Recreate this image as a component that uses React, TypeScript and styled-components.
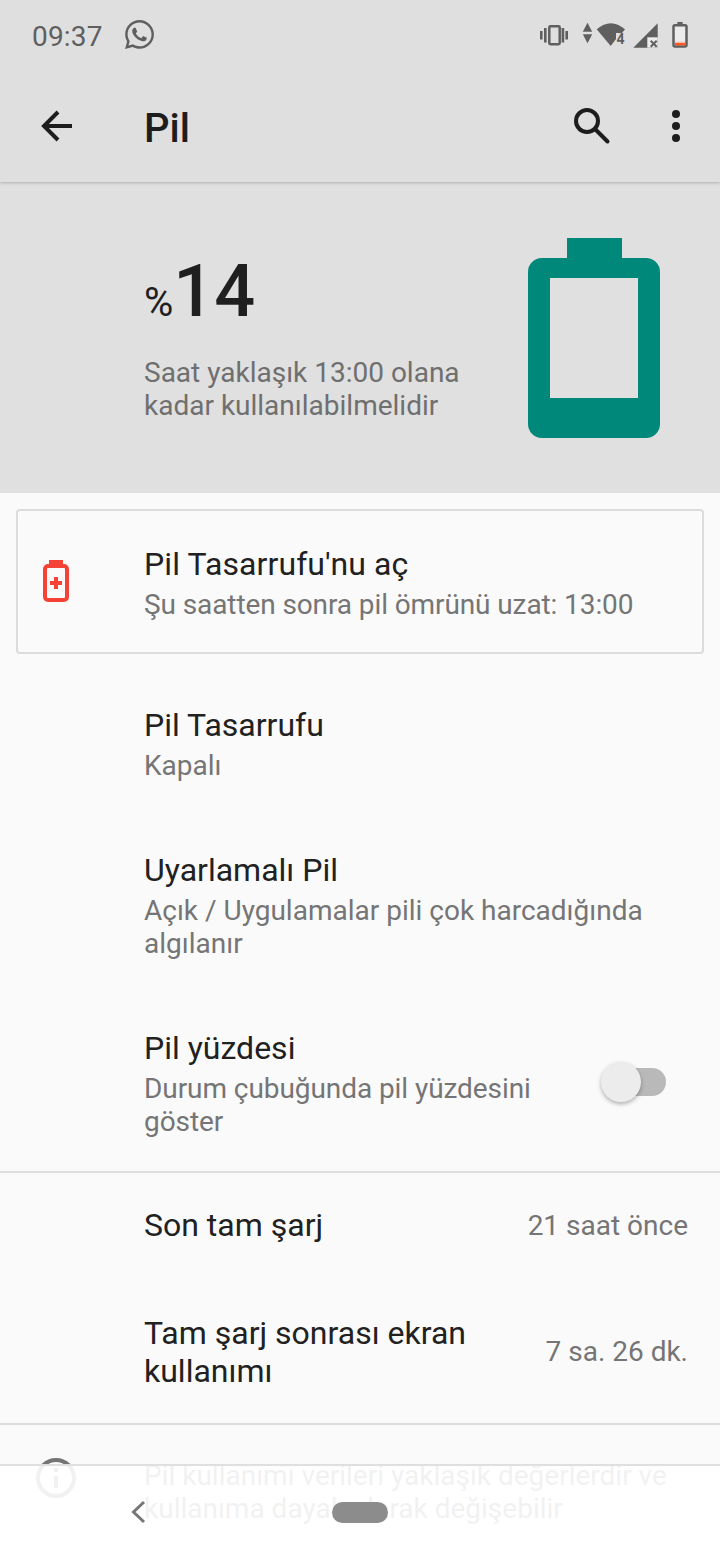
import React from "react";
import styled, { createGlobalStyle } from "styled-components";
import { FaWhatsapp } from "react-icons/fa";

const Global = createGlobalStyle`
  html, body { margin: 0; padding: 0; background: #fafafa; }
  body { font-family: Roboto, "Liberation Sans", sans-serif; -webkit-font-smoothing: antialiased; }
  * { box-sizing: border-box; }
`;

const Page = styled.div`
  position: relative;
  width: 720px;
  height: 1560px;
  overflow: hidden;
  background: #fafafa;
`;

const Top = styled.header`
  height: 182px;
  background: #dfdfdf;
  box-shadow: 0 1px 3px rgba(0, 0, 0, 0.22);
  position: relative;
  z-index: 1;
`;

const StatusBar = styled.div`
  height: 72px;
  display: flex;
  align-items: center;
  padding: 0 30px 0 32px;
  color: #5f5f5f;
`;

const Clock = styled.span`
  font-size: 28px;
  letter-spacing: 0.2px;
  margin-right: 20px;
`;

const AppNotice = styled.span`
  display: flex;
  margin-bottom: 4px;
`;

const StatusIcons = styled.svg`
  margin-left: auto;
  width: 152px;
  height: 30px;
  display: block;
`;

const Toolbar = styled.div`
  height: 110px;
  display: flex;
  align-items: center;
  padding: 0 16px 2px 28px;
  color: #1d1d1d;
`;

const ToolIcon = styled.svg`
  width: 56px;
  height: 56px;
  display: block;
  flex: none;
`;

const PageTitle = styled.h1`
  margin: 4px 0 0 60px;
  font-size: 40px;
  font-weight: 500;
  flex: 1;
`;

const ToolGap = styled.div`
  width: 28px;
`;

const Hero = styled.section`
  height: 311px;
  background: #e0e0e0;
  display: flex;
  padding: 56px 60px 0 144px;
  justify-content: space-between;
`;

const HeroText = styled.div`
  display: flex;
  flex-direction: column;
`;

const Level = styled.div`
  display: flex;
  align-items: baseline;
  height: 76px;
  color: #1f1f1f;
  line-height: 76px;
  margin-top: 16px;
`;

const Percent = styled.span`
  font-size: 40px;
  font-weight: 400;
`;

const LevelValue = styled.span`
  font-size: 72px;
  font-weight: 500;
`;

const HeroNote = styled.p`
  margin: 26px 0 0;
  font-size: 28px;
  line-height: 33px;
  color: #6f6f6f;
`;

const BigBattery = styled.svg`
  width: 132px;
  height: 200px;
  display: block;
`;

const Tip = styled.section`
  margin: 16px 16px 18px;
  height: 145px;
  border: 2px solid #dcdcdc;
  border-radius: 4px;
  display: flex;
  align-items: center;
  padding-top: 2px;
`;

const TipIcon = styled.svg`
  width: 26px;
  height: 42px;
  margin: 0 75px 4px 25px;
  flex: none;
  display: block;
`;

const Title = styled.div<{ $wide?: number }>`
  font-size: 32px;
  line-height: 38px;
  color: #212121;
  letter-spacing: ${(p) => p.$wide ?? 0}px;
`;

const Sub = styled.div<{ $tight?: number }>`
  font-size: 28px;
  line-height: 33px;
  margin-top: 5px;
  color: #757575;
  letter-spacing: ${(p) => p.$tight ?? 0}px;
`;

const Row = styled.div<{ $height: number; $drop?: number }>`
  height: ${(p) => p.$height}px;
  display: flex;
  align-items: center;
  padding: ${(p) => p.$drop ?? 0}px 32px 0 144px;
`;

const RowText = styled.div<{ $drop?: number }>`
  flex: 1;
  margin-top: ${(p) => p.$drop ?? 0}px;
`;

const Value = styled.div`
  font-size: 28px;
  color: #757575;
  white-space: nowrap;
`;

const Switch = styled.div`
  position: relative;
  width: 64px;
  height: 28px;
  border-radius: 14px;
  background: #b9b9b9;
  margin: 0 22px 3px 0;
  flex: none;
  &::before {
    content: "";
    position: absolute;
    left: -1px;
    top: -6px;
    width: 40px;
    height: 40px;
    border-radius: 50%;
    background: #ececec;
    box-shadow: 0 2px 4px rgba(0, 0, 0, 0.3);
  }
`;

const Divider = styled.hr`
  margin: 0;
  border: 0;
  height: 2px;
  background: #dedede;
`;

const Footer = styled.div`
  display: flex;
  align-items: flex-start;
  padding: 33px 32px 0 36px;
`;

const InfoIcon = styled.svg`
  width: 40px;
  height: 40px;
  margin-right: 68px;
  flex: none;
  display: block;
`;

const FooterText = styled.p`
  margin: 1px 0 0;
  font-size: 28px;
  line-height: 33px;
  color: #757575;
`;

const Nav = styled.nav`
  position: absolute;
  left: 0;
  right: 0;
  top: 1464px;
  height: 96px;
  background: rgba(255, 255, 255, 0.9);
  border-top: 2px solid #dfdfdf;
`;

const NavBack = styled.svg`
  position: absolute;
  left: 130px;
  top: 34px;
  width: 18px;
  height: 24px;
`;

const Pill = styled.div`
  position: absolute;
  left: 332px;
  top: 36px;
  width: 56px;
  height: 21px;
  border-radius: 11px;
  background: #8c8c8c;
`;

export default function App() {
  return (
    <Page>
      <Global />
      <Top>
        <StatusBar>
          <Clock>09:37</Clock>
          <AppNotice>
            <FaWhatsapp size={33} color="#5f5f5f" />
          </AppNotice>
          <StatusIcons viewBox="538 21 152 30" fill="#5f5f5f">
            <path d="M540 31h2.600v8.500H540zM544 28h2.600v14.500H544zM561.600 28h2.600v14.500h-2.600zM565.400 31h2.600v8.500h-2.600z" />
            <rect x="549.300" y="26.300" width="10.400" height="17.900" rx="1.200" fill="none" stroke="#5f5f5f" strokeWidth="2.500" />
            <path d="M587.500 22.700l4.700 9h-9.400zM587.500 43.300l-4.700-9h9.400z" />
            <path d="M596.700 29.300Q610.800 17.300 625 29.300L622 33H616V39L610.700 46z" />
            <text x="616.500" y="43.500" fontFamily="Roboto, sans-serif" fontSize="14" fontWeight="700">4</text>
            <path d="M633.300 47.700L657.700 23.300V47.700z" />
            <rect x="647.300" y="37.300" width="10.400" height="10.400" fill="#ececec" />
            <path d="M650.700 40.700l6 6M656.700 40.700l-6 6" stroke="#5f5f5f" strokeWidth="2" />
            <path d="M677.300 22h5.400v3h-5.400z" />
            <rect x="673.500" y="25.200" width="13" height="21.300" rx="1.500" fill="#ebebeb" stroke="#5f5f5f" strokeWidth="2.500" />
            <rect x="675" y="42.700" width="10" height="2.700" fill="#ff5722" />
            <rect x="675" y="41.500" width="10" height="1.200" fill="#f5c4b4" />
          </StatusIcons>
        </StatusBar>
        <Toolbar>
          <ToolIcon viewBox="0 0 56 56" fill="none" stroke="#1d1d1d" strokeWidth="4">
            <path d="M44 28H17M30 14L16 28l14 14" />
          </ToolIcon>
          <PageTitle>Pil</PageTitle>
          <ToolIcon viewBox="0 0 56 56" fill="none" stroke="#1d1d1d" strokeWidth="4">
            <circle cx="23" cy="23" r="11" />
            <path d="M31 31l12.500 12.500" strokeLinecap="round" />
          </ToolIcon>
          <ToolGap />
          <ToolIcon viewBox="0 0 56 56" fill="#1d1d1d">
            <circle cx="28" cy="16" r="4" />
            <circle cx="28" cy="28" r="4" />
            <circle cx="28" cy="40" r="4" />
          </ToolIcon>
        </Toolbar>
      </Top>

      <Hero>
        <HeroText>
          <Level>
            <Percent>%</Percent>
            <LevelValue>14</LevelValue>
          </Level>
          <HeroNote>
            Saat yaklaşık 13:00 olana
            <br />
            kadar kullanılabilmelidir
          </HeroNote>
        </HeroText>
        <BigBattery viewBox="0 0 132 200">
          <path
            fill="#00897b"
            fillRule="evenodd"
            d="M39 0h55v20h24a14 14 0 0 1 14 14v152a14 14 0 0 1-14 14H14a14 14 0 0 1-14-14V34a14 14 0 0 1 14-14h25zM22 40v120h88V40z"
          />
        </BigBattery>
      </Hero>

      <Tip>
        <TipIcon viewBox="0 0 26 42">
          <path
            fill="#f44336"
            fillRule="evenodd"
            d="M6 0h14v4h1a5 5 0 0 1 5 5v28a5 5 0 0 1-5 5H5a5 5 0 0 1-5-5V9a5 5 0 0 1 5-5h1zM5 8a1 1 0 0 0-1 1v28a1 1 0 0 0 1 1h16a1 1 0 0 0 1-1V9a1 1 0 0 0-1-1zM11 17h4v4h4v4h-4v4h-4v-4H7v-4h4z"
          />
        </TipIcon>
        <div>
          <Title $wide={0.1}>Pil Tasarrufu'nu aç</Title>
          <Sub $tight={-0.1}>Şu saatten sonra pil ömrünü uzat: 13:00</Sub>
        </div>
      </Tip>

      <Row $height={143}>
        <RowText>
          <Title>Pil Tasarrufu</Title>
          <Sub>Kapalı</Sub>
        </RowText>
      </Row>
      <Row $height={181}>
        <RowText>
          <Title>Uyarlamalı Pil</Title>
          <Sub>
            Açık / Uygulamalar pili çok harcadığında
            <br />
            algılanır
          </Sub>
        </RowText>
      </Row>
      <Row $height={175}>
        <RowText>
          <Title>Pil yüzdesi</Title>
          <Sub $tight={-0.07}>
            Durum çubuğunda pil yüzdesini
            <br />
            göster
          </Sub>
        </RowText>
        <Switch />
      </Row>
      <Divider />
      <Row $height={104}>
        <RowText>
          <Title>Son tam şarj</Title>
        </RowText>
        <Value>21 saat önce</Value>
      </Row>
      <Row $height={146} $drop={2}>
        <RowText $drop={2}>
          <Title>
            Tam şarj sonrası ekran
            <br />
            kullanımı
          </Title>
        </RowText>
        <Value>7 sa. 26 dk.</Value>
      </Row>
      <Divider />
      <Footer>
        <InfoIcon viewBox="0 0 40 40" fill="none" stroke="#757575" strokeWidth="4">
          <circle cx="20" cy="20" r="18" />
          <path d="M20 18v12M20 10v4" />
        </InfoIcon>
        <FooterText>
          Pil kullanımı verileri yaklaşık değerlerdir ve
          <br />
          kullanıma dayalı olarak değişebilir
        </FooterText>
      </Footer>

      <Nav>
        <NavBack viewBox="0 0 18 24" fill="none" stroke="#757575" strokeWidth="3">
          <path d="M14 2L3.500 12 14 22" />
        </NavBack>
        <Pill />
      </Nav>
    </Page>
  );
}
